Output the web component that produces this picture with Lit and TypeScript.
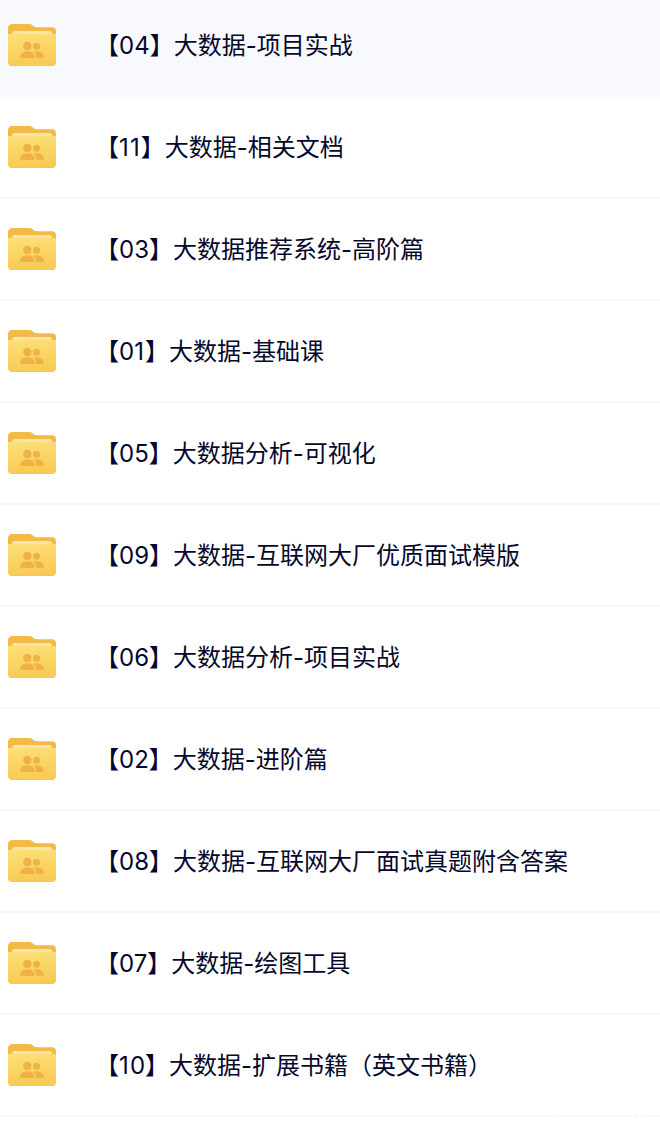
import { LitElement, html, css } from "lit";
import { customElement, property } from "lit/decorators.js";

@customElement("folder-icon")
class FolderIcon extends LitElement {
  static styles = css`
    :host { display: block; width: 48px; height: 44px; }
    svg { display: block; }
  `;
  render() {
    return html`<svg width="48" height="44" viewBox="0 0 48 44">
      <defs>
        <linearGradient id="front" x1="0" y1="0" x2="0.15" y2="1">
          <stop offset="0" stop-color="#fce07a" />
          <stop offset="0.5" stop-color="#fad666" />
          <stop offset="1" stop-color="#f9cb55" />
        </linearGradient>
        <linearGradient id="paper" x1="0" y1="0" x2="0" y2="1">
          <stop offset="0" stop-color="#fae3b0" />
          <stop offset="1" stop-color="#fbe6a8" />
        </linearGradient>
      </defs>
      <path fill="#f3ba45" d="M0 5.500Q0 1 4.500 1H21Q23.200 1 24.600 2.200L26 3.400Q27 4.200 28.500 4.200H43.500Q48 4.200 48 8.500V20H0Z" />
      <path fill="url(#paper)" d="M4.300 13V10.200Q4.300 8 6.500 8H41.700Q43.900 8 43.900 10.200V13Z" />
      <path fill="#f4c152" d="M0 37H48V38.500Q48 43 43.500 43H4.500Q0 43 0 38.500Z" />
      <path fill="url(#front)" d="M0 12Q0 11 1 11H47Q48 11 48 12V37.700Q48 42.200 43.500 42.200H4.500Q0 42.200 0 37.700Z" />
      <g fill="#efb246">
        <circle cx="19.300" cy="23" r="4.200" />
        <circle cx="28.600" cy="23.200" r="3.500" />
        <path d="M12.300 35.100V33.600Q12.300 28.500 19.400 28.500T26.500 33.600V35.100Z" />
        <path d="M28 35.100V33.200Q28 30.200 25.800 28.700C32 27.200 35.700 30.200 35.700 33.700V35.100Z" />
      </g>
    </svg>`;
  }
}

@customElement("folder-row")
class FolderRow extends LitElement {
  @property() name = "";
  static styles = css`
    :host {
      box-sizing: border-box;
      display: flex;
      align-items: center;
      gap: 39px;
      height: 102px;
      padding: 0 8px;
      border-bottom: 2px solid #f7f7f8;
      flex: none;
    }
    :host([selected]) { background: #f7f9fd; border-color: #f7f9fd; }
    .name {
      font: 400 24px/36px Inter, "Noto Sans CJK SC", sans-serif;
      color: #05082b;
      white-space: nowrap;
      padding-top: 1px;
      font-feature-settings: "calt" 0;
    }
    .one { letter-spacing: 1.1px; }
  `;
  render() {
    return html`<folder-icon></folder-icon><span class="name">${[...this.name].map((c) =>
      c === "1" ? html`<span class="one">1</span>` : c
    )}</span>`;
  }
}

@customElement("app-root")
class AppRoot extends LitElement {
  static styles = css`
    :host {
      display: block;
      position: relative;
      height: 1142px;
      overflow: hidden;
      background: #fff;
    }
    .list { display: flex; flex-direction: column; margin-top: -5px; }
    .mark { position: absolute; right: 0; bottom: 24px; }
  `;
  names = [
    "【04】大数据-项目实战",
    "【11】大数据-相关文档",
    "【03】大数据推荐系统-高阶篇",
    "【01】大数据-基础课",
    "【05】大数据分析-可视化",
    "【09】大数据-互联网大厂优质面试模版",
    "【06】大数据分析-项目实战",
    "【02】大数据-进阶篇",
    "【08】大数据-互联网大厂面试真题附含答案",
    "【07】大数据-绘图工具",
    "【10】大数据-扩展书籍（英文书籍）",
  ];
  render() {
    return html`<div class="list">
        ${this.names.map((n, i) => html`<folder-row .name=${n} ?selected=${i === 0}></folder-row>`)}
      </div>
      <svg class="mark" width="120" height="4" viewBox="0 0 120 4" stroke="#fff" stroke-width="1.500" fill="none">
        <path d="M9 0V4M13 0L15 4M18 0L20 4M23 0V4M33 0V4M50 0V4M61 4L64 0M72 4L74 0M81 4L84 0M93 0V4M98 0V2H106M113 0V4" />
      </svg>`;
  }
}
